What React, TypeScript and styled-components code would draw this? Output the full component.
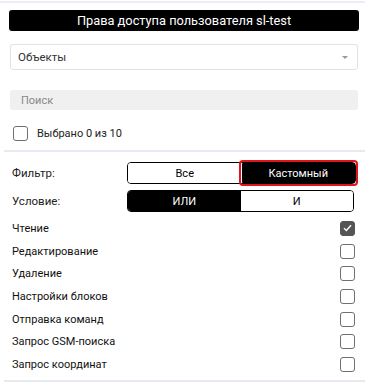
import React from "react";
import styled, { createGlobalStyle } from "styled-components";

const Global = createGlobalStyle`
  html, body { margin: 0; padding: 0; background: #fff; }
  body { font-family: Roboto, "Liberation Sans", sans-serif; color: #222; }
`;

const Panel = styled.div`
  width: 365px;
  border-top: 2px solid #eaeef6;
  margin-top: 1px;
  box-sizing: border-box;
`;

const Header = styled.div`
  margin: 7px 6px 0 9px;
  height: 21px;
  background: #000;
  border-radius: 3px;
  color: #fff;
  font-size: 12.8px;
  display: flex;
  align-items: center;
  justify-content: center;
`;

const Select = styled.div`
  margin: 13px 7px 0 10px;
  height: 26px;
  border: 1px solid #e2e2e2;
  border-radius: 3px;
  box-sizing: border-box;
  display: flex;
  align-items: center;
  justify-content: space-between;
  padding: 0 9px 0 7px;
  font-size: 11.5px;
  color: #333;
`;

const Arrow = styled.span`
  width: 0;
  height: 0;
  border-left: 3px solid transparent;
  border-right: 3px solid transparent;
  border-top: 3px solid #999;
`;

const Search = styled.div`
  margin: 20px 7px 0 10px;
  height: 20px;
  background: #f0f0f0;
  border-radius: 3px;
  display: flex;
  align-items: center;
  padding-left: 11px;
  font-size: 11px;
  color: #888;
`;

const SelectAll = styled.label`
  display: flex;
  align-items: center;
  gap: 9px;
  margin: 16px 0 0 13px;
  font-size: 11px;
  color: #222;
`;

const Box = styled.span<{ $checked?: boolean }>`
  width: 15px;
  height: 15px;
  box-sizing: border-box;
  border-radius: 3px;
  border: 1px solid ${(p) => (p.$checked ? "#555" : "#707070")};
  background: ${(p) => (p.$checked ? "#555" : "#fff")};
  display: flex;
  align-items: center;
  justify-content: center;
  flex-shrink: 0;
`;

const Divider = styled.div<{ $gap: number }>`
  margin: ${(p) => p.$gap}px 0 0 4px;
  height: 2px;
  background: #e6eaf1;
`;

const Grid = styled.div`
  display: grid;
  grid-template-columns: 115px 1fr;
  align-items: center;
  row-gap: 6px;
  margin: 10px 8px 0 12px;
  font-size: 11.5px;
`;

const Segments = styled.div<{ $outlined?: boolean }>`
  display: grid;
  grid-template-columns: 1fr 1fr;
  height: 22px;
  border: 1px solid #000;
  border-radius: 4px;
  box-sizing: border-box;
  margin-right: ${(p) => (p.$outlined ? "1px" : "3px")};
`;

const Seg = styled.div<{ $active?: boolean; $highlight?: boolean; $first?: boolean }>`
  display: flex;
  align-items: center;
  justify-content: center;
  font-size: 11px;
  background: ${(p) => (p.$active ? "#000" : "#fff")};
  color: ${(p) => (p.$active ? "#fff" : "#000")};
  border-radius: ${(p) => (p.$first ? "3px 0 0 3px" : "0 3px 3px 0")};
  ${(p) =>
    p.$highlight
      ? `outline: 2px solid #e0141b; outline-offset: 1px; border-radius: 1px;`
      : ""}
`;

const List = styled.div`
  margin: 5px 10px 0 12px;
  display: flex;
  flex-direction: column;
`;

const Row = styled.div`
  height: 22.7px;
  display: flex;
  align-items: center;
  justify-content: space-between;
  font-size: 11px;
  color: #111;
`;

const Check = () => (
  <svg width="9" height="8" viewBox="0 0 9 8">
    <path d="M1 4.2 L3.4 6.5 L8 1.3" fill="none" stroke="#fff" strokeWidth="1.4" />
  </svg>
);

const perms: [string, boolean][] = [
  ["Чтение", true],
  ["Редактирование", false],
  ["Удаление", false],
  ["Настройки блоков", false],
  ["Отправка команд", false],
  ["Запрос GSM-поиска", false],
  ["Запрос координат", false],
];

export default function App() {
  return (
    <>
      <Global />
      <Panel>
        <Header>Права доступа пользователя sl-test</Header>
        <Select>
          <span>Объекты</span>
          <Arrow />
        </Select>
        <Search>Поиск</Search>
        <SelectAll>
          <Box />
          Выбрано 0 из 10
        </SelectAll>
        <Divider $gap={9} />
        <Grid>
          <span>Фильтр:</span>
          <Segments $outlined>
            <Seg $first>Все</Seg>
            <Seg $active $highlight>Кастомный</Seg>
          </Segments>
          <span>Условие:</span>
          <Segments>
            <Seg $first $active>ИЛИ</Seg>
            <Seg>И</Seg>
          </Segments>
        </Grid>
        <List>
          {perms.map(([name, on]) => (
            <Row key={name}>
              <span>{name}</span>
              <Box $checked={on}>{on && <Check />}</Box>
            </Row>
          ))}
        </List>
        <Divider $gap={4} />
      </Panel>
    </>
  );
}
